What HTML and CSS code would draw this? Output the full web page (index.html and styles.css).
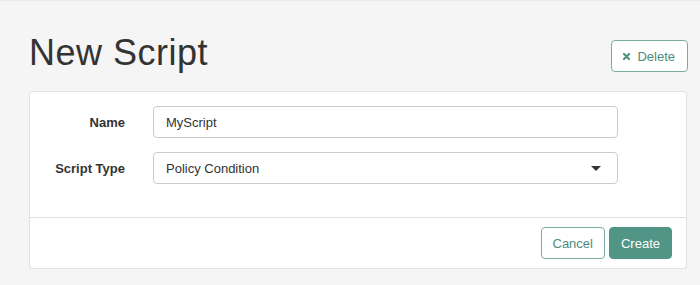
FILE: index.html
```html
<!DOCTYPE html>
<html lang="en">
<head>
<meta charset="utf-8">
<title>New Script</title>
<link rel="stylesheet" href="styles.css">
</head>
<body>
<div class="page">
  <header class="header">
    <h1 class="title">New Script</h1>
    <button class="btn btn-outline btn-delete" type="button">
      <svg class="icon-times" width="7" height="7" viewBox="0 0 7 7" aria-hidden="true"><path d="M1 1L6 6M6 1L1 6" stroke="currentColor" stroke-width="2" stroke-linecap="round"/></svg>
      <span>Delete</span>
    </button>
  </header>
  <section class="panel">
    <div class="panel-body">
      <div class="form-row">
        <label class="form-label" for="name">Name</label>
        <input class="form-control" id="name" type="text" value="MyScript">
      </div>
      <div class="form-row">
        <label class="form-label">Script Type</label>
        <div class="form-control select">
          <span>Policy Condition</span>
          <svg class="caret" width="10" height="5" viewBox="0 0 10 5" aria-hidden="true"><path d="M0 0H10L5 5Z" fill="#333"/></svg>
        </div>
      </div>
    </div>
    <div class="panel-footer">
      <button class="btn btn-outline" type="button">Cancel</button>
      <button class="btn btn-primary" type="button">Create</button>
    </div>
  </section>
</div>
</body>
</html>
```
FILE: styles.css
```css
html, body {
  margin: 0;
  padding: 0;
}
body {
  background: #f5f5f5;
  font-family: "Liberation Sans", Arial, sans-serif;
  color: #333;
  font-size: 13px;
  border-top: 1px solid #ebebeb;
}
.page {
  padding: 32px 12px 0 29px;
}
.header {
  display: flex;
  justify-content: space-between;
  align-items: flex-end;
}
.title {
  margin: 0;
  font-size: 36px;
  line-height: 39px;
  font-weight: normal;
  letter-spacing: 0.5px;
  color: #333;
}
.btn {
  font-family: "Liberation Sans", Arial, sans-serif;
  font-size: 13px;
  height: 32px;
  padding: 0 11px;
  border-radius: 4px;
  border: 1px solid #5c9b8f;
  background: #fff;
  color: #4c8c80;
  display: inline-flex;
  align-items: center;
  cursor: pointer;
}
.btn-outline {
  border-color: #79ada3;
}
.btn-delete {
  padding: 0 12px 0 11px;
  gap: 7px;
}
.icon-times {
  color: #4c8c80;
}
.btn-primary {
  background: #519586;
  border-color: #519586;
  color: #fff;
}
.panel {
  margin-top: 19px;
  margin-right: 1px;
  background: #fff;
  border: 1px solid #e3e3e3;
  border-radius: 4px;
  box-shadow: 0 1px 1px rgba(0, 0, 0, 0.06);
}
.panel-body {
  padding: 14px 68px 33px 0;
  display: flex;
  flex-direction: column;
  gap: 14px;
}
.form-row {
  display: flex;
  align-items: center;
}
.form-label {
  width: 95px;
  margin-right: 28px;
  text-align: right;
  font-weight: bold;
  color: #333;
}
.form-control {
  box-sizing: border-box;
  flex: 1;
  height: 32px;
  border: 1px solid #ccc;
  border-radius: 4px;
  padding: 0 12px;
  font-family: "Liberation Sans", Arial, sans-serif;
  font-size: 13px;
  color: #333;
  background: #fff;
  outline: none;
}
.select {
  display: flex;
  align-items: center;
  justify-content: space-between;
  padding-right: 16px;
}
.panel-footer {
  border-top: 1px solid #e0e0e0;
  padding: 9px 14px 9px;
  display: flex;
  justify-content: flex-end;
  gap: 4px;
}
```
